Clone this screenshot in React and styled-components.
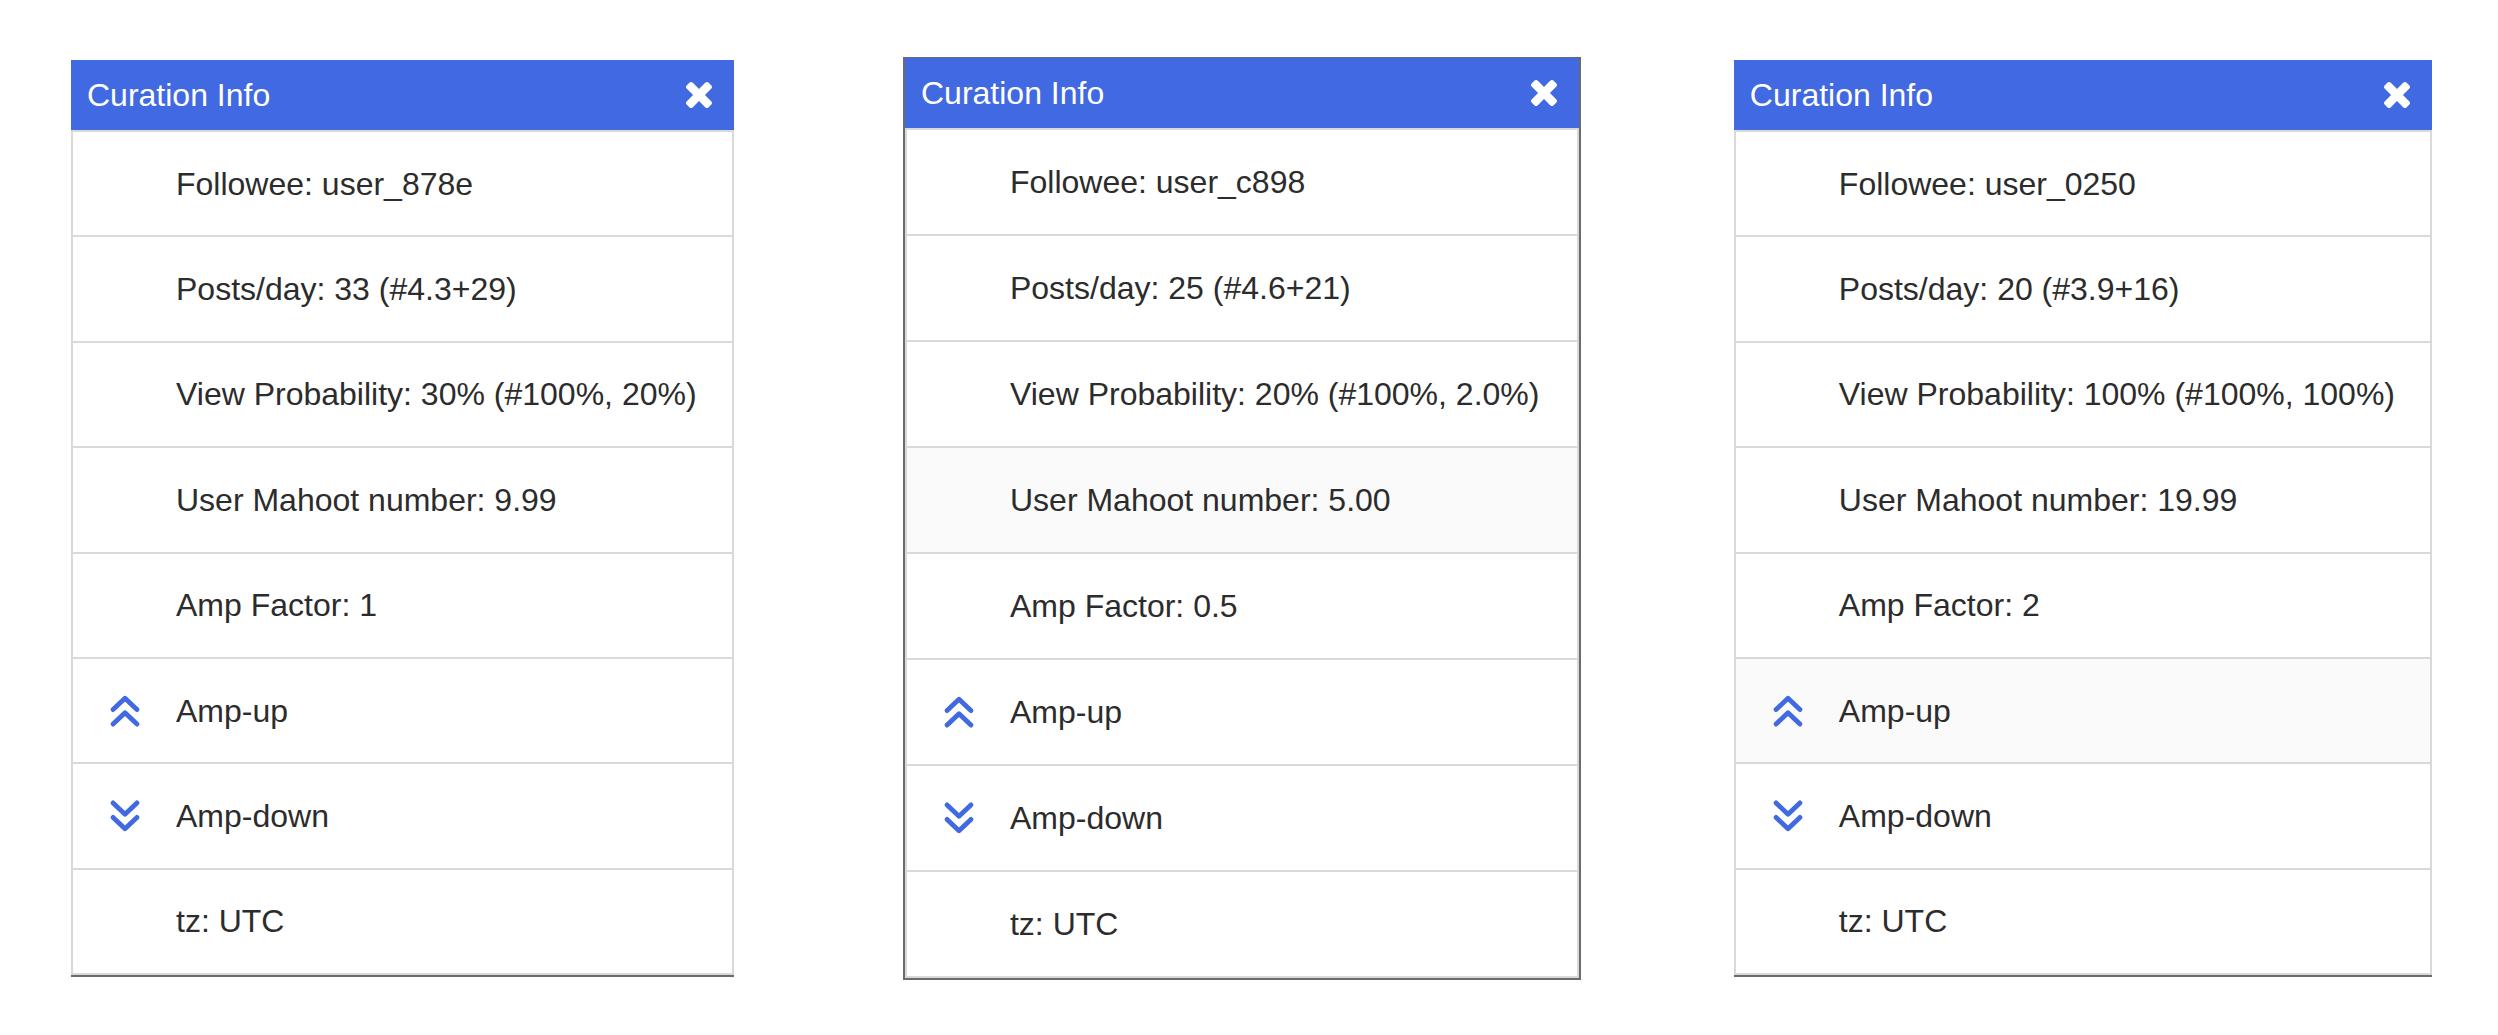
import React from "react";
import styled, { createGlobalStyle, css } from "styled-components";

const GlobalStyle = createGlobalStyle`
  * { box-sizing: border-box; }
  body { margin: 0; background: #fff; }
`;

const Page = styled.main`
  min-height: 100vh;
  padding: 60px 66px 58px 71px;
  display: flex;
  justify-content: space-between;
  align-items: stretch;
  font-family: "Liberation Sans", Arial, Helvetica, sans-serif;
  color: #2c2c2c;
`;

const Panel = styled.section`
  --row-end: 35px;
  display: flex;
  flex-direction: column;
  border-bottom: 2px solid #6b6b6b;
  ${(p) =>
    p.$focused &&
    css`
      --row-end: 38px;
      margin: -3px 0 -3px 17px;
      border: 2px solid #6b6b6b;
      border-top-width: 1px;
    `}
`;

const Header = styled.header`
  height: 70px;
  padding: 0 22px 0 16px;
  display: flex;
  align-items: center;
  justify-content: space-between;
  background: #4169e1;
  color: #fff;
`;

const Title = styled.h2`
  margin: 0;
  font-size: 32px;
  line-height: 40px;
  font-weight: 400;
`;

const CloseButton = styled.button`
  display: flex;
  padding: 0;
  border: 0;
  background: none;
  color: inherit;
  cursor: pointer;
`;

const Rows = styled.ul`
  flex: 1;
  margin: 0;
  padding: 0;
  list-style: none;
  display: grid;
  grid-auto-rows: 1fr;
  border: 2px solid #d9d9d9;
  border-top: 0;
`;

const Row = styled.li`
  display: flex;
  background: ${(p) => (p.$active ? "#fafafa" : "#fff")};
  border-top: 2px solid #d9d9d9;
`;

const rowLayout = css`
  flex: 1;
  display: grid;
  grid-template-columns: 103px auto;
  align-items: center;
  justify-content: start;
  padding: 0 var(--row-end) 0 0;
  font-size: 32px;
  line-height: 40px;
  white-space: nowrap;
`;

const Info = styled.div`
  ${rowLayout}
`;

const Action = styled.button`
  ${rowLayout}
  border: 0;
  background: none;
  color: inherit;
  font-family: inherit;
  text-align: left;
  cursor: pointer;
`;

const IconCell = styled.span`
  display: flex;
  padding-left: 37px;
  color: #4169e1;
`;

const CloseIcon = () => (
  <svg width="26" height="26" viewBox="110 366 1188 1188" fill="currentColor" aria-hidden="true">
    <path d="M1298 1322q0 40-28 68l-136 136q-28 28-68 28t-68-28l-294-294-294 294q-28 28-68 28t-68-28l-136-136q-28-28-28-68t28-68l294-294-294-294q-28-28-28-68t28-68l136-136q28-28 68-28t68 28l294 294 294-294q28-28 68-28t68 28l136 136q28 28 28 68t-28 68l-294 294 294 294q28 28 28 68z" />
  </svg>
);

const Chevrons = ({ down }) => (
  <svg width="30" height="32" viewBox="0 0 30 32" fill="none" stroke="currentColor" strokeWidth="4.8" strokeLinecap="round" strokeLinejoin="round" aria-hidden="true">
    {down ? (
      <path d="M3.1 2.9 15 14.3 26.9 2.9M3.1 17.4 15 28.8 26.9 17.4" />
    ) : (
      <path d="M3.1 14.6 15 3.2 26.9 14.6M3.1 29.1 15 17.7 26.9 29.1" />
    )}
  </svg>
);

const panels = [
  { user: "user_878e", posts: "33 (#4.3+29)", view: "30% (#100%, 20%)", mahoot: "9.99", amp: "1" },
  { user: "user_c898", posts: "25 (#4.6+21)", view: "20% (#100%, 2.0%)", mahoot: "5.00", amp: "0.5", focused: true, active: "mahoot" },
  { user: "user_0250", posts: "20 (#3.9+16)", view: "100% (#100%, 100%)", mahoot: "19.99", amp: "2", active: "up" },
];

const InfoRow = ({ text, active }) => (
  <Row $active={active}>
    <Info>
      <IconCell />
      <span>{text}</span>
    </Info>
  </Row>
);

const ActionRow = ({ text, active, down }) => (
  <Row $active={active}>
    <Action type="button">
      <IconCell>
        <Chevrons down={down} />
      </IconCell>
      <span>{text}</span>
    </Action>
  </Row>
);

const CurationPanel = ({ user, posts, view, mahoot, amp, focused, active }) => (
  <Panel $focused={focused}>
    <Header>
      <Title>Curation Info</Title>
      <CloseButton type="button" aria-label="Close">
        <CloseIcon />
      </CloseButton>
    </Header>
    <Rows>
      <InfoRow text={`Followee: ${user}`} />
      <InfoRow text={`Posts/day: ${posts}`} />
      <InfoRow text={`View Probability: ${view}`} />
      <InfoRow text={`User Mahoot number: ${mahoot}`} active={active === "mahoot"} />
      <InfoRow text={`Amp Factor: ${amp}`} />
      <ActionRow text="Amp-up" active={active === "up"} />
      <ActionRow text="Amp-down" down />
      <InfoRow text="tz: UTC" />
    </Rows>
  </Panel>
);

export default function App() {
  return (
    <>
      <GlobalStyle />
      <Page>
        {panels.map((panel) => (
          <CurationPanel key={panel.user} {...panel} />
        ))}
      </Page>
    </>
  );
}
